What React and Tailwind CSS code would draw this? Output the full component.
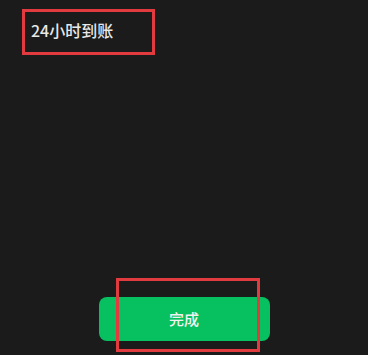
export default function App() {
  return (
    <div
      className="relative flex h-[355px] w-[368px] flex-col bg-[#1b1b1b]"
      style={{ fontFamily: '"Noto Sans CJK SC", "Noto Sans", sans-serif' }}
    >
      <div className="px-[31px] pt-[19px] text-[16px] font-medium leading-[22px] text-[#e8e8e8]">
        24小时到账
      </div>

      <div className="mt-auto flex justify-center pb-[14px]">
        <button
          type="button"
          className="flex h-[44px] w-[171px] items-center justify-center rounded-[8px] bg-[#07c160] text-[15px] font-medium text-[#f2f2f2]"
        >
          完成
        </button>
      </div>

      {/* annotation boxes */}
      <div className="pointer-events-none absolute left-[22px] top-[9px] h-[46px] w-[133px] border-[3px] border-[#e23b3f]" />
      <div className="pointer-events-none absolute left-[116px] top-[278px] h-[74px] w-[144px] border-[3px] border-[#e23b3f]" />
    </div>
  );
}
